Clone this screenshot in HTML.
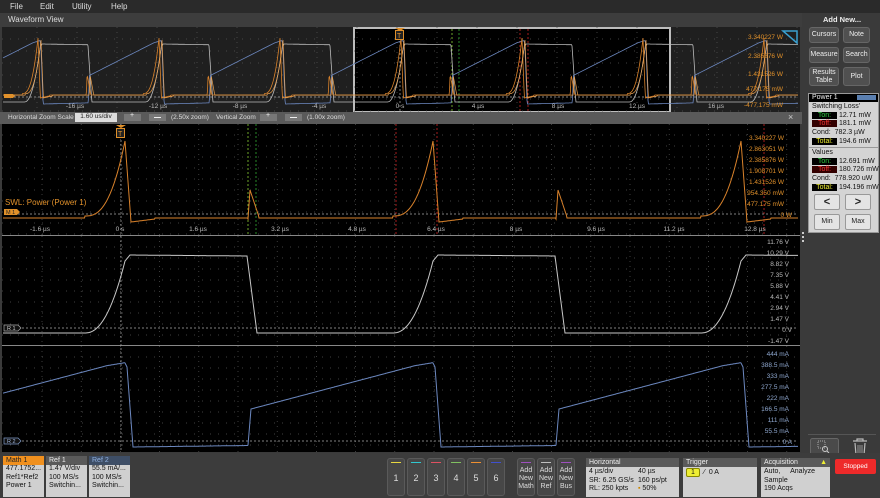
<!DOCTYPE html>
<html><head><meta charset="utf-8"><style>
*{margin:0;padding:0;box-sizing:border-box}
body{width:880px;height:498px;background:#3a3a3a;font-family:"Liberation Sans",sans-serif;overflow:hidden;position:relative;color:#ddd}
.a{position:absolute}
.t{font-size:7px;white-space:nowrap}
.btn{position:absolute;background:#505050;border:1px solid #666;border-radius:3px;color:#eee;font-size:7px;text-align:center;display:flex;align-items:center;justify-content:center;line-height:8px}
.pl .r{position:absolute;left:3px;font-size:7px;color:#111;white-space:nowrap}
.tag{display:inline-block;background:#000;width:25px;text-align:center;margin-right:2px}
.box{position:absolute;background:#d0d0d0;color:#111;font-size:7px;line-height:8.5px}
.box .h{height:9px;color:#eee;padding-left:3px;line-height:9px}
.ch{position:absolute;top:458px;width:18px;height:38px;background:#474747;border:1px solid #5a5a5a;border-radius:3px;color:#ddd;font-size:9px;text-align:center;line-height:38px}
.ch i{position:absolute;left:3px;right:3px;top:3px;height:1px}
</style></head><body>
<div class="a" style="left:0;top:0;width:880px;height:13px;background:#2a2a2a"></div>
<div class="a t" style="left:10px;top:2px;font-size:8px;color:#ddd">File</div>
<div class="a t" style="left:40px;top:2px;font-size:8px;color:#ddd">Edit</div>
<div class="a t" style="left:72px;top:2px;font-size:8px;color:#ddd">Utility</div>
<div class="a t" style="left:111px;top:2px;font-size:8px;color:#ddd">Help</div>
<div class="a" style="left:0;top:13px;width:802px;height:14px;background:#3d3d3d"></div>
<div class="a t" style="left:8px;top:15px;font-size:8px;color:#ddd">Waveform View</div>
<div class="a" style="left:2px;top:27px;width:798px;height:85px;background:#1f1f1f"></div>
<div class="a" style="left:353px;top:27px;width:318px;height:86px;background:#000;border:2px solid #bdbdbd"></div>
<div class="a" style="left:0;top:112px;width:802px;height:12px;background:#5a5a5a"></div>
<div class="a t" style="left:8px;top:114px;color:#ddd;font-size:6.5px">Horizontal Zoom Scale</div>
<div class="a t" style="left:75px;top:113px;width:42px;height:9px;background:#ddd;color:#222;text-align:center;font-size:6.5px">1.60 us/div</div>
<div class="a" style="left:124px;top:114px;width:17px;height:7px;background:#777"></div>
<div class="a t" style="left:130px;top:112px;color:#eee">+</div>
<div class="a" style="left:149px;top:114px;width:17px;height:7px;background:#777"></div>
<div class="a" style="left:154px;top:117px;width:7px;height:1px;background:#eee"></div>
<div class="a t" style="left:171px;top:114px;color:#ddd;font-size:6.5px">(2.50x zoom)</div>
<div class="a t" style="left:216px;top:114px;color:#ddd;font-size:6.5px">Vertical Zoom</div>
<div class="a" style="left:260px;top:114px;width:17px;height:7px;background:#777"></div>
<div class="a t" style="left:266px;top:112px;color:#eee">+</div>
<div class="a" style="left:285px;top:114px;width:17px;height:7px;background:#777"></div>
<div class="a" style="left:290px;top:117px;width:7px;height:1px;background:#eee"></div>
<div class="a t" style="left:307px;top:114px;color:#ddd;font-size:6.5px">(1.00x zoom)</div>
<div class="a t" style="left:788px;top:112px;color:#ccc;font-size:9px">×</div>
<div class="a" style="left:2px;top:124px;width:798px;height:328px;background:#000"></div>
<div class="a" style="left:2px;top:235px;width:798px;height:1px;background:#888"></div>
<div class="a" style="left:2px;top:345px;width:798px;height:1px;background:#888"></div>
<div class="a" style="left:802px;top:232px;width:2px;height:2px;background:#ccc"></div>
<div class="a" style="left:802px;top:236px;width:2px;height:2px;background:#ccc"></div>
<div class="a" style="left:802px;top:240px;width:2px;height:2px;background:#ccc"></div>

<svg class="a" style="left:0;top:0" width="880" height="498" id="sv" font-family="Liberation Sans, sans-serif" font-size="6.5">
<g id="grid"></g><g id="tr" fill="none" stroke-width="1"></g>
<g fill="#e0902a" text-anchor="end">
<text x="783" y="39">3.340227 W</text><text x="783" y="58">2.385876 W</text><text x="783" y="76">1.431526 W</text><text x="783" y="91">477.175 mW</text><text x="783" y="107">-477.175 mW</text>
<text x="784" y="140">3.340227 W</text><text x="784" y="151">2.863051 W</text><text x="784" y="162">2.385876 W</text><text x="784" y="173">1.908701 W</text><text x="784" y="184">1.431526 W</text><text x="784" y="195">954.350 mW</text><text x="784" y="206">477.175 mW</text><text x="792" y="217">0 W</text>
</g>
<g fill="#bbb" text-anchor="end">
<text x="789" y="244">11.76 V</text><text x="789" y="255">10.29 V</text><text x="789" y="266">8.82 V</text><text x="789" y="277">7.35 V</text><text x="789" y="288">5.88 V</text><text x="789" y="299">4.41 V</text><text x="789" y="310">2.94 V</text><text x="789" y="321">1.47 V</text><text x="792" y="332">0 V</text><text x="789" y="343">-1.47 V</text>
</g>
<g fill="#8fa8d0" text-anchor="end">
<text x="789" y="356">444 mA</text><text x="789" y="367">388.5 mA</text><text x="789" y="378">333 mA</text><text x="789" y="389">277.5 mA</text><text x="789" y="400">222 mA</text><text x="789" y="411">166.5 mA</text><text x="789" y="422">111 mA</text><text x="789" y="433">55.5 mA</text><text x="792" y="444">0 A</text>
</g>
<g fill="#bbb" text-anchor="middle">
<text x="75" y="108">-16 µs</text><text x="158" y="108">-12 µs</text><text x="240" y="108">-8 µs</text><text x="319" y="108">-4 µs</text><text x="400" y="108">0 s</text><text x="478" y="108">4 µs</text><text x="558" y="108">8 µs</text><text x="637" y="108">12 µs</text><text x="716" y="108">16 µs</text>
<text x="40" y="231">-1.6 µs</text><text x="120" y="231">0 s</text><text x="198" y="231">1.6 µs</text><text x="280" y="231">3.2 µs</text><text x="357" y="231">4.8 µs</text><text x="436" y="231">6.4 µs</text><text x="516" y="231">8 µs</text><text x="596" y="231">9.6 µs</text><text x="674" y="231">11.2 µs</text><text x="755" y="231">12.8 µs</text>
</g>
<text x="5" y="205" fill="#e0902a" font-size="8">SWL: Power (Power 1)</text>
<path d="M4 209h13l3 3-3 3H4z" fill="#e0902a"/><text x="6" y="214" font-size="5.5" fill="#222">M 1</text>
<path d="M4 94h9l2 2-2 2H4z" fill="#e0902a"/>
<path d="M4 325h14l3 3-3 3H4z" fill="#111" stroke="#aaa" stroke-width=".7"/><text x="7" y="330" font-size="5.5" fill="#ccc">R 1</text>
<path d="M4 438h14l3 3-3 3H4z" fill="#111" stroke="#7f9ac8" stroke-width=".7"/><text x="7" y="443" font-size="5.5" fill="#9fb5dc">R 2</text>
<path d="M116 125h10l-5 3z" fill="#e0902a"/><rect x="116.5" y="128.5" width="8" height="9" fill="#222" stroke="#e0902a"/><text x="118" y="136" font-size="7" fill="#e0902a">T</text>
<path d="M395 28h10l-5 3z" fill="#e0902a"/><rect x="395.5" y="30.5" width="8" height="9" fill="#222" stroke="#e0902a"/><text x="397" y="38" font-size="7" fill="#e0902a">T</text>
<path d="M783 31h14v12z" fill="none" stroke="#3aa0d0" stroke-width="1.5"/>
<!-- zoom icon & trash -->
<rect x="810.5" y="438.5" width="28" height="16" rx="2" fill="#4a4a4a" stroke="#666"/>
<rect x="818" y="441" width="7" height="7" fill="none" stroke="#ccc" stroke-width=".7" stroke-dasharray="1 1"/>
<circle cx="825" cy="449" r="2.5" fill="none" stroke="#ccc"/><path d="M827 451l2 2" stroke="#ccc"/>
<g fill="none" stroke="#bbb" stroke-width="1.2"><path d="M853 441h14M857 441v-2h6v2M855 443l1 12h8l1-12"/><path d="M858 445v8M860 445v8M862 445v8" stroke-width=".7"/></g>
</svg>

<div class="a" style="left:804px;top:13px;width:76px;height:420px;background:#3a3a3a"></div>
<div class="a t" style="left:806px;top:15px;width:72px;text-align:center;font-size:7.5px;color:#eee;font-weight:bold">Add New...</div>
<div class="btn" style="left:809px;top:27px;width:30px;height:16px">Cursors</div>
<div class="btn" style="left:843px;top:27px;width:27px;height:16px">Note</div>
<div class="btn" style="left:809px;top:47px;width:30px;height:16px">Measure</div>
<div class="btn" style="left:843px;top:47px;width:27px;height:16px">Search</div>
<div class="btn" style="left:809px;top:67px;width:30px;height:19px">Results<br>Table</div>
<div class="btn" style="left:843px;top:67px;width:27px;height:19px">Plot</div>
<div class="a pl" style="left:808px;top:93px;width:71px;height:140px;background:#d4d4d4;border:1px solid #999">
 <div class="a" style="left:0;top:0;width:69px;height:8px;background:#000;color:#eee;font-size:7px;line-height:8px;padding-left:3px">Power 1</div>
 <div class="a" style="left:48px;top:1px;width:19px;height:5px;background:#5a7fb0"></div>
 <div class="r" style="top:9px">Switching Loss'</div>
 <div class="r" style="top:18px"><span class="tag" style="color:#2ecc40">Ton:</span>12.71 mW</div>
 <div class="r" style="top:26px"><span class="tag" style="color:#e33;background:#300">Toff:</span>181.1 mW</div>
 <div class="r" style="top:35px">Cond:&nbsp;&nbsp;782.3 µW</div>
 <div class="r" style="top:44px"><span class="tag" style="color:#ee3">Total:</span>194.6 mW</div>
 <div class="a" style="left:0;top:53px;width:69px;height:1px;background:#999"></div>
 <div class="r" style="top:55px">Values</div>
 <div class="r" style="top:64px"><span class="tag" style="color:#2ecc40">Ton:</span>12.691 mW</div>
 <div class="r" style="top:72px"><span class="tag" style="color:#e33;background:#300">Toff:</span>180.726 mW</div>
 <div class="r" style="top:81px">Cond:&nbsp;&nbsp;778.920 uW</div>
 <div class="r" style="top:90px"><span class="tag" style="color:#ee3">Total:</span>194.196 mW</div>
 <div class="a" style="left:5px;top:100px;width:26px;height:16px;background:#e4e4e4;border:1px solid #999;border-radius:2px;text-align:center;font-size:11px;font-weight:bold;color:#222;line-height:14px">&lt;</div>
 <div class="a" style="left:36px;top:100px;width:26px;height:16px;background:#e4e4e4;border:1px solid #999;border-radius:2px;text-align:center;font-size:11px;font-weight:bold;color:#222;line-height:14px">&gt;</div>
 <div class="a" style="left:5px;top:120px;width:26px;height:16px;background:#e4e4e4;border:1px solid #999;border-radius:2px;text-align:center;font-size:7px;color:#222;line-height:14px">Min</div>
 <div class="a" style="left:36px;top:120px;width:26px;height:16px;background:#e4e4e4;border:1px solid #999;border-radius:2px;text-align:center;font-size:7px;color:#222;line-height:14px">Max</div>
</div>
<div class="a" style="left:808px;top:434px;width:68px;height:1px;background:#555"></div>

<div class="a" style="left:0;top:453px;width:880px;height:45px;background:#3c3c3c"></div>
<div class="box" style="left:3px;top:456px;width:41px;height:41px"><div class="h" style="background:#f0901e;color:#222">Math 1</div><div style="padding-left:3px">477.1752...<br>Ref1*Ref2<br>Power 1</div></div>
<div class="box" style="left:46px;top:456px;width:41px;height:41px"><div class="h" style="background:#5a5a5a">Ref 1</div><div style="padding-left:3px">1.47 V/div<br>100 MS/s<br>Switchin...</div></div>
<div class="box" style="left:89px;top:456px;width:41px;height:41px"><div class="h" style="background:#3e4e66;color:#8fb0e0">Ref 2</div><div style="padding-left:3px">55.5 mA/...<br>100 MS/s<br>Switchin...</div></div>
<div class="ch" style="left:387px"><i style="background:#e8d840"></i>1</div>
<div class="ch" style="left:407px"><i style="background:#30c8d0"></i>2</div>
<div class="ch" style="left:427px"><i style="background:#e05060"></i>3</div>
<div class="ch" style="left:447px"><i style="background:#80c060"></i>4</div>
<div class="ch" style="left:467px"><i style="background:#f09030"></i>5</div>
<div class="ch" style="left:487px"><i style="background:#4050d0"></i>6</div>
<div class="ch" style="left:517px;line-height:8px;font-size:7px;padding-top:8px"><i style="background:#a050c0"></i>Add<br>New<br>Math</div>
<div class="ch" style="left:537px;line-height:8px;font-size:7px;padding-top:8px"><i style="background:#c0c0c0"></i>Add<br>New<br>Ref</div>
<div class="ch" style="left:557px;line-height:8px;font-size:7px;padding-top:8px"><i style="background:#a050c0"></i>Add<br>New<br>Bus</div>
<div class="box" style="left:586px;top:458px;width:93px;height:39px"><div class="h" style="background:#5a5a5a">Horizontal</div><div style="padding:1px 3px;position:relative">4 µs/div<br>SR: 6.25 GS/s<br>RL: 250 kpts<div class="a" style="left:52px;top:1px">40 µs<br>160 ps/pt<br><span style="color:#c80">▪</span> 50%</div></div></div>
<div class="box" style="left:683px;top:458px;width:74px;height:39px"><div class="h" style="background:#5a5a5a">Trigger</div><div style="padding:2px 3px"><span style="background:#ee3;border:1px solid #880;border-radius:2px;padding:0 4px">1</span>&nbsp; ⁄&nbsp; 0 A</div></div>
<div class="box" style="left:761px;top:458px;width:69px;height:39px"><div class="h" style="background:#5a5a5a">Acquisition <span style="color:#ee3;float:right;margin-right:3px">▲</span></div><div style="padding:1px 3px">Auto,&nbsp;&nbsp;&nbsp;&nbsp;&nbsp;Analyze<br>Sample<br>190 Acqs</div></div>
<div class="a" style="left:835px;top:459px;width:41px;height:15px;background:#ee2a2a;border-radius:2px;color:#fff;font-size:6.5px;text-align:center;line-height:15px">Stopped</div>

<script>
var NS="http://www.w3.org/2000/svg";
function el(p,tag,at){var e=document.createElementNS(NS,tag);for(var k in at)e.setAttribute(k,at[k]);p.appendChild(e);return e;}
var G=document.getElementById('grid'),T=document.getElementById('tr');
function grid(x0,x1,y0,y1,dx,dy,ox){
 for(var x=ox;x<x1;x+=dx){if(x<x0)continue;el(G,'line',{x1:x,x2:x,y1:y0,y2:y1,stroke:'#555','stroke-dasharray':'1 4','stroke-width':.7});}
 for(var y=y0+dy;y<y1;y+=dy)el(G,'line',{x1:x0,x2:x1,y1:y,y2:y,stroke:'#555','stroke-dasharray':'1 7','stroke-width':.7});
}
grid(2,800,124,235,39.2,11,42);grid(2,800,236,345,39.2,11,42);grid(2,800,346,452,39.2,11,42);grid(2,800,27,112,40,12,37);
[[121,124,452,'#999'],[400,29,111,'#999']].forEach(function(a){el(G,'line',{x1:a[0],x2:a[0],y1:a[1],y2:a[2],stroke:a[3],'stroke-dasharray':'2 2','stroke-width':.8});});
[[248,'#8c3'],[256,'#3a3']].forEach(function(a){el(G,'line',{x1:a[0],x2:a[0],y1:124,y2:235,stroke:a[1],'stroke-dasharray':'2 2','stroke-width':.8});});
[[396,'#c22'],[437,'#c22'],[764,'#c22']].forEach(function(a){el(G,'line',{x1:a[0],x2:a[0],y1:124,y2:235,stroke:a[1],'stroke-dasharray':'2 2','stroke-width':.8});});
[[452,'#8c3'],[459,'#3a3'],[520,'#c22'],[528,'#c22']].forEach(function(a){el(G,'line',{x1:a[0],x2:a[0],y1:29,y2:111,stroke:a[1],'stroke-dasharray':'2 2','stroke-width':.8});});
[[214,'#aaa'],[328,'#aaa'],[441,'#aaa'],[97,'#aaa']].forEach(function(a){el(G,'line',{x1:14,x2:798,y1:a[0],y2:a[0],stroke:a[1],'stroke-dasharray':'2 2','stroke-width':.7});});
var P=308;
function md(t){return ((t%P)+P)%P;}
function pw(t){t=md(t+40)-40;
 if(t<0)return 216-75*Math.pow((t+40)/40,2.6);
 if(t<6)return 141+81*t/6;
 if(t<30)return 222-3*(t-6)/24;
 if(t>=123&&t<125)return 219-29*(t-123)/2;
 if(t>=125&&t<134)return 190+27*(t-125)/9;
 return 218;}
function r1(t){t=md(t+40)-40;
 if(t<0)return 333-72*Math.pow((t+40)/40,2.2);
 if(t<5)return 261-6*t/5;
 if(t<122)return 255+1*(t-5)/117;
 if(t<132)return 256+77*(t-122)/10;
 return 333;}
function r2(t){t=md(t);
 if(t<2)return 363+2*t;
 if(t<8)return 367+80*(t-2)/6;
 if(t<123)return 447-1.5*(t-8)/115;
 if(t<126)return 445-36*(t-123)/3;
 var y=409-46*(t-126)/174; if(t>290)y+= (t-290)*0.1; return Math.max(y,362);}
function path(f,x0,x1,sc,off,ya,yb,col,w){var d='';for(var x=x0;x<=x1;x+=0.5){var y=f((x-off)/sc);y=ya+(y-yb[0])*yb[1];d+=(d?'L':'M')+x+' '+y.toFixed(1);}el(T,'path',{d:d,stroke:col,'stroke-width':w||1});}
path(r1,3,798,1,125,0,[0,1],'#c8c8c8');
path(r2,3,798,1,125,0,[0,1],'#6c88c0');
path(pw,3,798,1,125,0,[0,1],'#d9822b');
var s=121/308;
path(r1,3,798,s,403,44,[255,58/78],'#bbbbbb',.8);
path(r2,3,798,s,403,40,[362,64/85],'#6c88c0',.8);
path(pw,3,798,s,401,38,[141,60/81],'#d9822b',.8);
path(pw,3,798,s,404,40,[141,58/81],'#e8a050',.7);
</script>
</body></html>
